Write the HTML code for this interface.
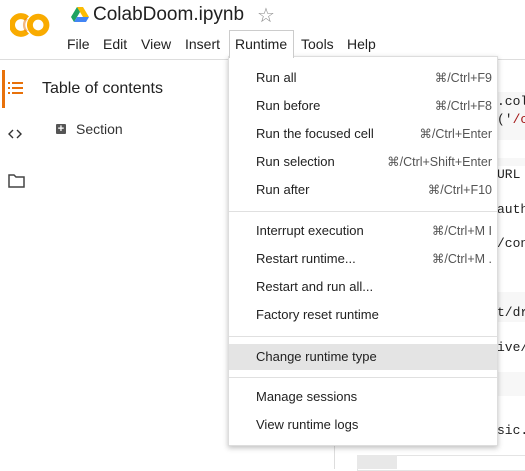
<!DOCTYPE html><html><head><style>
body{margin:0;width:525px;height:469px;overflow:hidden;background:#fff;font-family:"Liberation Sans",Arial,sans-serif;position:relative;color:#212121}
.a{position:absolute}
.mi{position:absolute;left:0;right:0;height:26px;font-size:13px;line-height:26px}
.mi span{position:absolute;left:27px}
.mi i{position:absolute;right:5px;font-style:normal;color:#555;font-size:12.5px}
.sep{position:absolute;left:0;right:0;height:1px;background:#e0e0e0}
.code{position:absolute;font-family:"Liberation Mono",monospace;font-size:13px;color:#222}
</style></head><body>
<div class="a" style="left:0;top:59px;width:525px;height:1px;background:#ddd"></div>
<svg class="a" style="left:10px;top:12px" width="41" height="26" viewBox="0 0 34 22"><path d="M14 5.5A7.5 7.5 0 1 0 14 16.5" fill="none" stroke="#f9ab00" stroke-width="5"/><circle cx="23.5" cy="11" r="7" fill="none" stroke="#f9ab00" stroke-width="5"/><path d="M14 5.5A7.5 7.5 0 0 0 14 16.5" fill="none" stroke="#e8710a" stroke-width="2" opacity=".5"/></svg>
<svg class="a" style="left:71px;top:7px" width="18" height="16" viewBox="0 0 18 16"><path d="M6 0h6l6 10h-6z" fill="#fbbc04"/><path d="M6 0L0 10l3 5 6-10z" fill="#1ea362"/><path d="M3 15h12l3-5H6z" fill="#4285f4"/></svg>
<div class="a" style="left:93px;top:4px;font-size:19px">ColabDoom.ipynb</div>
<div class="a" style="left:257px;top:3px;font-size:20px;color:#888">☆</div>
<div class="a" style="left:67px;top:36px;font-size:14px">File</div>
<div class="a" style="left:103px;top:36px;font-size:14px">Edit</div>
<div class="a" style="left:141px;top:36px;font-size:14px">View</div>
<div class="a" style="left:185px;top:36px;font-size:14px">Insert</div>
<div class="a" style="left:229px;top:30px;width:63px;height:27px;border:1px solid #ccc;border-bottom:none;background:#fff;z-index:3"></div>
<div class="a" style="left:235px;top:36px;font-size:14px;z-index:4">Runtime</div>
<div class="a" style="left:301px;top:36px;font-size:14px">Tools</div>
<div class="a" style="left:347px;top:36px;font-size:14px">Help</div>
<div class="a" style="left:2px;top:70px;width:3px;height:38px;background:#e8710a"></div>
<svg class="a" style="left:8px;top:81px" width="16" height="14"><g fill="#e8710a"><rect x="0" y="1" width="2" height="2"/><rect x="0" y="6" width="2" height="2"/><rect x="0" y="11" width="2" height="2"/><rect x="4" y="1" width="11" height="2"/><rect x="4" y="6" width="11" height="2"/><rect x="4" y="11" width="11" height="2"/></g></svg>
<svg class="a" style="left:8px;top:129px" width="14" height="10"><path d="M5 1L1 5l4 4M9 1l4 4-4 4" fill="none" stroke="#333" stroke-width="1.4"/></svg>
<svg class="a" style="left:8px;top:174px" width="17" height="14"><path d="M1 1h5l2 2h8v10H1z" fill="none" stroke="#444" stroke-width="1.5"/></svg>
<div class="a" style="left:42px;top:80px;font-size:16px;color:#222">Table of contents</div>
<div class="a" style="left:56px;top:124px;width:10px;height:10px;background:#555;border-radius:1px;color:#fff;font-size:11px;line-height:10px;text-align:center;font-weight:bold">+</div>
<div class="a" style="left:76px;top:121px;font-size:14px;color:#333">Section</div>
<div class="a" style="left:334px;top:60px;width:1px;height:409px;background:#ddd"></div>
<div class="a" style="left:335px;top:92px;width:190px;height:48px;background:#f7f7f7"></div>
<div class="a" style="left:335px;top:158px;width:190px;height:8px;background:#f7f7f7"></div>
<div class="a" style="left:335px;top:292px;width:190px;height:30px;background:#f7f7f7"></div>
<div class="a" style="left:335px;top:372px;width:190px;height:24px;background:#f7f7f7"></div>
<div class="a" style="left:357px;top:455px;width:168px;height:14px;border:1px solid #e4e4e4;background:#fff"></div>
<div class="a" style="left:357px;top:455px;width:40px;height:14px;background:#e8e8e8"></div>
<div class="code" style="left:497px;top:94px">.col</div>
<div class="code" style="left:497px;top:112px">('<span style="color:#a31515">/c</span></div>
<div class="code" style="left:497px;top:167px">URL</div>
<div class="code" style="left:497px;top:202px">auth</div>
<div class="code" style="left:497px;top:236px">/con</div>
<div class="code" style="left:497px;top:305px">t/dr</div>
<div class="code" style="left:497px;top:340px">ive/</div>
<div class="code" style="left:497px;top:423px">sic.</div>
<div class="a" style="left:228px;top:56px;width:268px;height:388px;background:#fff;border:1px solid #ddd;box-shadow:0 2px 5px rgba(0,0,0,.25);z-index:2">
<div class="mi" style="top:8px"><span>Run all</span><i>⌘/Ctrl+F9</i></div>
<div class="mi" style="top:36px"><span>Run before</span><i>⌘/Ctrl+F8</i></div>
<div class="mi" style="top:64px"><span>Run the focused cell</span><i>⌘/Ctrl+Enter</i></div>
<div class="mi" style="top:92px"><span>Run selection</span><i>⌘/Ctrl+Shift+Enter</i></div>
<div class="mi" style="top:120px"><span>Run after</span><i>⌘/Ctrl+F10</i></div>
<div class="sep" style="top:154px"></div>
<div class="mi" style="top:161px"><span>Interrupt execution</span><i>⌘/Ctrl+M I</i></div>
<div class="mi" style="top:189px"><span>Restart runtime...</span><i>⌘/Ctrl+M .</i></div>
<div class="mi" style="top:217px"><span>Restart and run all...</span></div>
<div class="mi" style="top:245px"><span>Factory reset runtime</span></div>
<div class="sep" style="top:279px"></div>
<div class="mi" style="top:287px;background:#e4e4e4"><span>Change runtime type</span></div>
<div class="sep" style="top:320px"></div>
<div class="mi" style="top:327px"><span>Manage sessions</span></div>
<div class="mi" style="top:355px"><span>View runtime logs</span></div>
</div>
</body></html>
